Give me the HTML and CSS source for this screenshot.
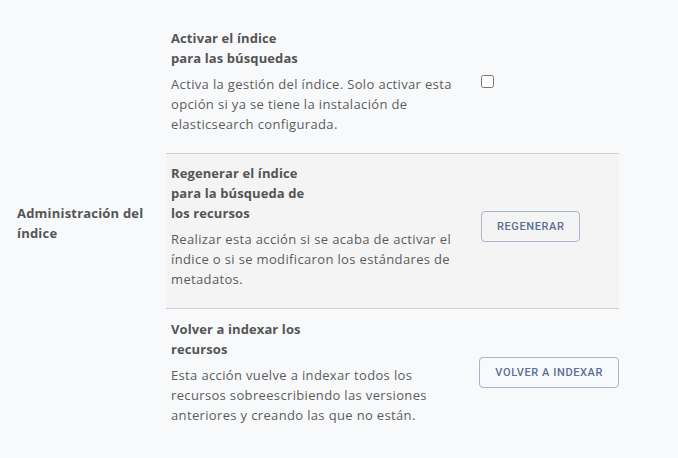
FILE: index.html
```html
<!DOCTYPE html>
<html>
<head>
    <title>Administración del índice</title>
    <link rel="stylesheet" href="styles.css">
</head>
<body>
    <div class="settings-section">
        <div class="section-label">Administración del índice</div>

        <div class="section-rows">
            <div class="setting-row">
                <div class="setting-text">
                    <h3>Activar el índice<br>para las búsquedas</h3>
                    <p>Activa la gestión del índice. Solo activar esta opción si ya se tiene la instalación de elasticsearch configurada.</p>
                </div>
                <div class="setting-control">
                    <input type="checkbox" id="index-enabled">
                </div>
            </div>

            <div class="setting-row shaded">
                <div class="setting-text">
                    <h3>Regenerar el índice<br>para la búsqueda de<br>los recursos</h3>
                    <p>Realizar esta acción si se acaba de activar el índice o si se modificaron los estándares de metadatos.</p>
                </div>
                <div class="setting-control">
                    <button class="btn-outline">Regenerar</button>
                </div>
            </div>

            <div class="setting-row">
                <div class="setting-text">
                    <h3>Volver a indexar los<br>recursos</h3>
                    <p>Esta acción vuelve a indexar todos los recursos sobreescribiendo las versiones anteriores y creando las que no están.</p>
                </div>
                <div class="setting-control">
                    <button class="btn-outline">Volver a indexar</button>
                </div>
            </div>
        </div>
    </div>
</body>
</html>
```

FILE: styles.css
```css
body {
    font-family: "Open Sans", Arial, sans-serif;
    margin: 0;
    background-color: #f8f9fa;
    color: #555;
}
.settings-section {
    display: flex;
    align-items: center;
    padding: 18px 0 16px 0;
}
.section-label {
    width: 149px;
    padding-left: 17px;
    font-size: 13px;
    font-weight: bold;
    line-height: 20px;
    color: #555;
    margin-top: -16px;
    letter-spacing: 0.2px;
}
.section-rows {
    width: 453px;
}
.setting-row {
    display: flex;
    align-items: center;
    padding: 10px 0 19px 5px;
    border-bottom: 1px solid #d2d2d2;
}
.setting-row:last-child {
    border-bottom: none;
}
.setting-row.shaded {
    background: #f4f4f4;
    padding-top: 9px;
}
.setting-text {
    width: 290px;
    margin-right: 20px;
}
.setting-text h3 {
    margin: 0 0 6px 0;
    font-size: 13px;
    line-height: 20px;
    font-weight: bold;
    color: #555;
    letter-spacing: 0.1px;
}
.setting-text p {
    margin: 0;
    font-size: 13px;
    line-height: 20px;
    color: #5c5c5c;
    letter-spacing: 0.35px;
}
.setting-control input[type="checkbox"] {
    width: 13px;
    height: 13px;
    margin: 6px 0 0 0;
}
.btn-outline {
    font-family: Roboto, Arial, sans-serif;
    font-size: 11px;
    font-weight: 500;
    letter-spacing: 0.6px;
    text-transform: uppercase;
    white-space: nowrap;
    color: #5b6f97;
    background: transparent;
    border: 1px solid #a9b5ca;
    border-radius: 4px;
    padding: 0 15px;
    height: 31px;
    cursor: pointer;
}
.btn-outline:hover {
    background: #eef1f6;
}
```
